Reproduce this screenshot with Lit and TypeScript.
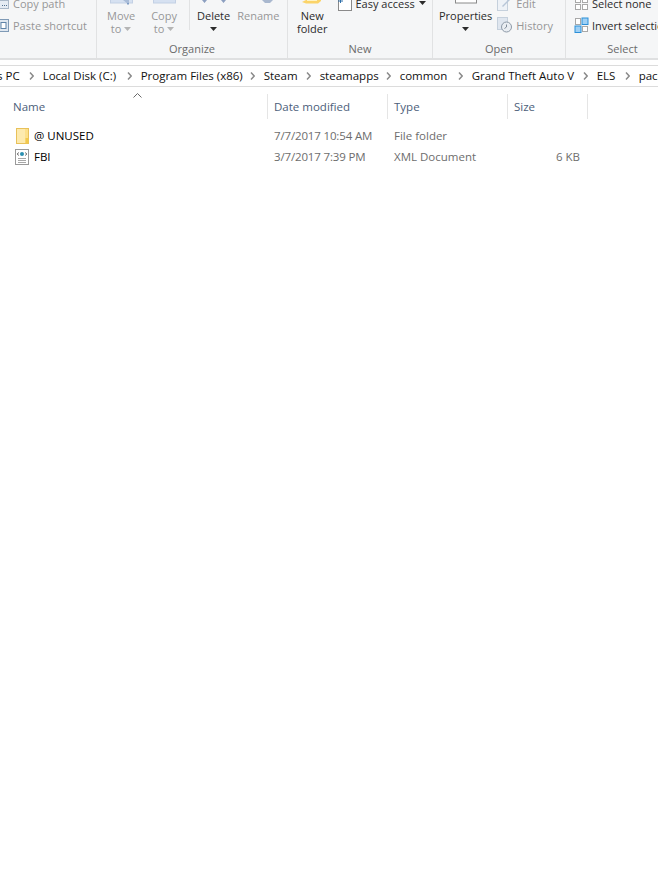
import { LitElement, html, css } from "lit";
import { customElement } from "lit/decorators.js";

const caret = html`<svg class="caret" width="7" height="4" viewBox="0 0 7 4"><path d="M0 0h7L3.5 4z" fill="currentColor"/></svg>`;

@customElement("app-root")
export class AppRoot extends LitElement {
  static styles = css`
    :host { display: block; width: 658px; height: 884px; background: #fff; overflow: hidden;
      font-family: "Open Sans", "Noto Sans", sans-serif; font-size: 11.5px; color: #000; }
    .ribbon { display: flex; height: 58px; background: #f5f6f7; border-bottom: 2px solid #dfe0e1; overflow: hidden; font-size: 11px; }
    .group { display: flex; flex-direction: column; flex: none; box-sizing: border-box; height: 58px; border-right: 1px solid #e1e2e3; }
    .group:last-child { border-right: 0; flex: 1; }
    .g1 { width: 97px; } .g2 { width: 191px; } .g3 { width: 145px; } .g4 { width: 133px; }
    .body { flex: none; height: 40px; display: flex; align-items: flex-end; box-sizing: border-box; }
    .label { flex: none; height: 17px; line-height: 17px; text-align: center; color: #6a6a6a; }
    .dis { color: #979797; }
    .dis .caret { color: #b5b5b5; }
    .dark { color: #2b2b2b; }
    .stack { display: flex; flex-direction: column; }
    .row { display: flex; align-items: center; gap: 4px; height: 22px; white-space: nowrap; }
    .big { display: flex; flex-direction: column; align-items: center; flex: none; line-height: 13px; text-align: center; white-space: nowrap; }
    .big svg.ic { display: block; }
    .caret { display: inline-block; vertical-align: middle; }
    .big .two { height: 13px; display: flex; align-items: center; justify-content: center; gap: 3px; }
    .g1 .stack { margin-left: -4px; padding-bottom: 4px; }
    .g2 .body { padding-bottom: 5px; }
    .movecopy { display: flex; gap: 16px; width: 92px; padding-left: 10px; box-sizing: border-box; flex: none; }
    .vsep { width: 1px; height: 30px; background: #e1e2e3; margin: 0 7px 5px 0; flex: none; }
    .delren { display: flex; gap: 7px; }
    .delren .big:last-child { padding-bottom: 13px; }
    .g3 .body { padding-bottom: 5px; padding-left: 9px; gap: 9px; }
    .g3 .stack { padding-bottom: 21px; }
    .g4 .body { padding-left: 6px; padding-bottom: 4px; gap: 5px; }
    .g4 .big { padding-bottom: 1px; }
    .g5 .stack { padding-left: 8px; padding-bottom: 4px; }
    .g5 .row { gap: 3px; }
    .g5 .label { width: 113px; }
    .addr { display: flex; align-items: center; height: 19px; padding-bottom: 1px; margin-top: 5px; border-top: 1px solid #dcdcdc; border-bottom: 1px solid #dcdcdc;
      white-space: nowrap; overflow: hidden; color: #111; gap: 9px; }
    .addr svg, .addr span { flex: none; }
    .first { margin-left: -3px; }
    .head { display: grid; grid-template-columns: 267px 120px 120px 80px; height: 25px; margin-top: 7px; position: relative; width: 587px; border-right: 1px solid #e5e5e5; }
    .h { color: #4c607a; line-height: 25px; padding-left: 6px; border-left: 1px solid #e5e5e5; }
    .h:first-child { border-left: 0; padding-left: 13px; }
    .sort { position: absolute; left: 133px; top: -1px; }
    .rows { margin-top: 6px; }
    .r { display: grid; grid-template-columns: 268px 120px 120px 72px; height: 21px; line-height: 21px; width: 580px; }
    .n { display: flex; align-items: center; gap: 5px; padding-left: 15px; }
    .c { color: #6d6d6d; padding-left: 6px; }
    .d { letter-spacing: -0.15px; }
    .s { text-align: right; padding-left: 0; }
  `;

  sep() {
    return html`<svg width="5" height="8" viewBox="0 0 5 8"><path d="M1 .5L4.2 4 1 7.5" fill="none" stroke="#8a8a8a" stroke-width="1.5"/></svg>`;
  }

  render() {
    const crumbs: [string, number][] = [["Local Disk (C:)", 75], ["Program Files (x86)", 100], ["Steam", 33], ["steamapps", 57], ["common", 49], ["Grand Theft Auto V", 102], ["ELS", 19], ["pack_default", 80]];
    return html`
      <div class="ribbon">
        <div class="group g1">
          <div class="body"><div class="stack">
            <div class="row dis">
              <svg width="13" height="13" viewBox="0 0 13 13"><rect x="0.5" y="3.5" width="12" height="8" fill="#e4ebf3" stroke="#a9b8c8"/><path d="M6 8.5h6" stroke="#4f6f8f" stroke-dasharray="1 1"/></svg>
              <span>Copy path</span></div>
            <div class="row dis">
              <svg width="13" height="14" viewBox="0 0 13 14"><rect x="0.5" y="1.5" width="12" height="12" fill="#dfe7f0" stroke="#7f9ab6"/><rect x="5" y="4.5" width="5" height="6" fill="#fff" stroke="#5f83a8"/></svg>
              <span>Paste shortcut</span></div>
          </div></div>
          <div class="label">&nbsp;</div>
        </div>
        <div class="group g2">
          <div class="body">
            <div class="movecopy dis">
              <div class="big">
                <svg class="ic" width="23" height="9" viewBox="0 0 23 9"><rect x="0.5" y="-2" width="22" height="5" fill="#d6e1f1" stroke="#c3d0e4"/><path d="M13 0l5 4h1V0z" fill="#a9bcd8"/><path d="M17 3h2v1.5h-2z" fill="#7f9cc4"/></svg>
                <span>Move</span><span class="two">to ${caret}</span></div>
              <div class="big">
                <svg class="ic" width="23" height="9" viewBox="0 0 23 9"><rect x="0.5" y="-2" width="22" height="5" fill="#d6e1f1" stroke="#c3d0e4"/></svg>
                <span>Copy</span><span class="two">to ${caret}</span></div>
            </div>
            <div class="vsep"></div>
            <div class="delren">
              <div class="big dark">
                <svg class="ic" width="24" height="9" viewBox="0 0 24 9"><path d="M0 0h5L2.5 3zM19 0h5l-2.5 3z" fill="#8c9fc0"/></svg>
                <span>Delete</span><span class="two">${caret}</span></div>
              <div class="big dis">
                <svg class="ic" width="41" height="9" viewBox="0 0 41 9"><path d="M24 0h11l-3 3h-5z" fill="#a9b8cf"/></svg>
                <span>Rename</span></div>
            </div>
          </div>
          <div class="label">Organize</div>
        </div>
        <div class="group g3">
          <div class="body">
            <div class="big dark">
              <svg class="ic" width="22" height="9" viewBox="0 0 22 9"><path d="M1 2l4-2h15v1l-3 2.5H5z" fill="#fbd469"/><path d="M6 0h10v1H6z" fill="#fff3c4"/></svg>
              <span>New</span><span>folder</span></div>
            <div class="stack"><div class="row dark">
              <svg width="15" height="16" viewBox="0 0 15 16"><rect x="1.5" y="-1" width="13" height="16.5" fill="#fff" stroke="#8a8a8a"/><path d="M1 6h5M3.5 4v4" stroke="#2f6fa8"/></svg>
              <span>Easy access</span>${caret}</div></div>
          </div>
          <div class="label">New</div>
        </div>
        <div class="group g4">
          <div class="body">
            <div class="big dark">
              <svg class="ic" width="22" height="9" viewBox="0 0 22 9"><rect x="0.5" y="-3" width="21" height="6" fill="#fff" stroke="#8a8a8a"/></svg>
              <span>Properties</span><span class="two">${caret}</span></div>
            <div class="stack">
              <div class="row dis"><svg width="15" height="15" viewBox="0 0 15 15"><rect x="0.5" y="2.5" width="10" height="12" fill="#eef2f7" stroke="#c5d0dc"/><path d="M5 10L13 2l1 1-8 8z" fill="#b7c6d8"/></svg><span>Edit</span></div>
              <div class="row dis"><svg width="15" height="16" viewBox="0 0 15 16"><rect x="0.5" y="0.5" width="10" height="12" fill="#dfe6ef" stroke="#c5d0dc"/><circle cx="9.5" cy="10" r="5" fill="#e9edf2" stroke="#8d99a7"/><path d="M9.5 7.5V10l-2 1.5" stroke="#7d8997" fill="none"/></svg><span>History</span></div>
            </div>
          </div>
          <div class="label">Open</div>
        </div>
        <div class="group g5">
          <div class="body"><div class="stack">
            <div class="row dark"><svg width="15" height="15" viewBox="0 0 15 15"><g fill="#fff" stroke="#a8a8a8"><rect x="1.5" y="1.5" width="5" height="5"/><rect x="8.5" y="1.5" width="5" height="5"/><rect x="1.5" y="8.5" width="5" height="5"/><rect x="8.5" y="8.5" width="5" height="5"/></g></svg><span>Select none</span></div>
            <div class="row dark"><svg width="15" height="16" viewBox="0 0 15 16"><rect x="1.5" y="1.5" width="5" height="6" fill="#fff" stroke="#a8a8a8"/><rect x="8" y="1" width="6" height="6.5" fill="#9fd0f5" stroke="#2b8fd8"/><rect x="1" y="9" width="6" height="6.5" fill="#9fd0f5" stroke="#2b8fd8"/><rect x="8.5" y="9.5" width="5" height="5" fill="#fff" stroke="#a8a8a8"/></svg><span>Invert selection</span></div>
          </div></div>
          <div class="label">Select</div>
        </div>
      </div>
      <div class="addr">
        <span class="first">s PC</span>
        ${crumbs.map(([c, w]) => html`${this.sep()}<span style="width:${w}px">${c}</span>`)}
      </div>
      <div class="head">
        <div class="h">Name</div><div class="h">Date modified</div><div class="h">Type</div><div class="h">Size</div>
        <svg class="sort" width="9" height="5" viewBox="0 0 9 5"><path d="M0.5 4.5l4-4 4 4" stroke="#6a6a6a" fill="none"/></svg>
      </div>
      <div class="rows">
        <div class="r">
          <div class="n"><svg width="14" height="16" viewBox="0 0 14 16"><rect x="1.5" y="0.5" width="12" height="15" fill="#fde08a" stroke="#e8c15a"/><rect x="2" y="1" width="8" height="14" fill="#fdeaae"/><rect x="10.5" y="10" width="3" height="5.5" fill="#f2c94c"/></svg><span>@ UNUSED</span></div>
          <div class="c d">7/7/2017 10:54 AM</div><div class="c">File folder</div><div class="c s"></div>
        </div>
        <div class="r">
          <div class="n"><svg width="14" height="16" viewBox="0 0 14 16"><rect x="0.5" y="0.5" width="13" height="15" fill="#fff" stroke="#9a9a9a"/><path d="M3 9.5h8M3 11.5h8M3 13.5h8" stroke="#a8a8a8"/><path d="M4 3.5L2 5l2 1.5M10 3.5L12 5l-2 1.5" fill="none" stroke="#777"/><circle cx="7" cy="5" r="2" fill="#2a8fb0"/></svg><span>FBI</span></div>
          <div class="c d">3/7/2017 7:39 PM</div><div class="c">XML Document</div><div class="c s">6 KB</div>
        </div>
      </div>
    `;
  }
}
